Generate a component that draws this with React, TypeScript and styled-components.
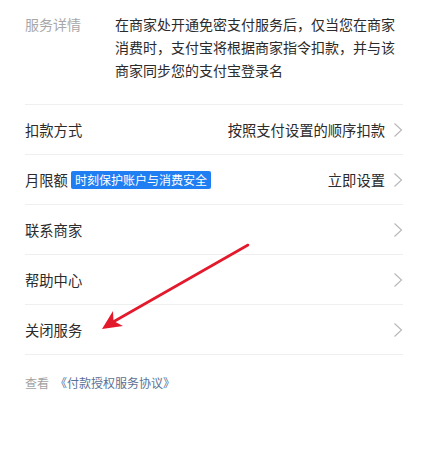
import React from "react";
import styled, { createGlobalStyle } from "styled-components";

const Global = createGlobalStyle`
  html, body {
    margin: 0;
    padding: 0;
    background: #ffffff;
  }
  body {
    font-family: "Noto Sans CJK SC", "Noto Sans", sans-serif;
    color: #2b2b2b;
  }
`;

const Page = styled.div`
  position: relative;
  width: 427px;
  height: 474px;
  background: #fff;
  box-sizing: border-box;
  padding: 0 24px 0 25px;
  overflow: hidden;
`;

const Detail = styled.div`
  display: grid;
  grid-template-columns: 90px 1fr;
  padding: 13px 0 22px;
  font-size: 14px;
  line-height: 23px;
`;

const DetailLabel = styled.div`
  color: #a8a8a8;
`;

const DetailText = styled.div`
  color: #2b2b2b;
`;

const Row = styled.div`
  display: flex;
  align-items: center;
  height: 49px;
  border-top: 1px solid #efefef;
  font-size: 14.3px;
  color: #2b2b2b;
`;

const Label = styled.span`
  white-space: nowrap;
`;

const Badge = styled.span`
  margin-left: 3px;
  height: 18px;
  line-height: 18px;
  padding: 0 4px;
  border-radius: 2px;
  background: #1f7ef2;
  color: #fff;
  font-size: 12px;
  white-space: nowrap;
`;

const Value = styled.span`
  margin-left: auto;
  margin-right: 8px;
  color: #2b2b2b;
  white-space: nowrap;
`;

const Spacer = styled.span`
  margin-left: auto;
`;

const Chevron = () => (
  <svg width="10" height="16" viewBox="0 0 10 16" style={{ display: "block" }}>
    <path d="M1.5 1.5 L8.5 8 L1.5 14.5" fill="none" stroke="#b9b9b9" strokeWidth="1.2" />
  </svg>
);

const Rows = styled.div`
  border-bottom: 1px solid #efefef;
`;

const Footer = styled.div`
  margin-top: 19px;
  font-size: 12px;
  line-height: 18px;
  display: flex;
  gap: 6px;
`;

const FooterMuted = styled.span`
  color: #a2a2a2;
`;

const FooterLink = styled.span`
  color: #5b6f94;
`;

const ArrowSvg = styled.svg`
  position: absolute;
  left: 0;
  top: 0;
  pointer-events: none;
`;

export default function App() {
  return (
    <>
      <Global />
      <Page>
        <Detail>
          <DetailLabel>服务详情</DetailLabel>
          <DetailText>
            在商家处开通免密支付服务后，仅当您在商家消费时，支付宝将根据商家指令扣款，并与该商家同步您的支付宝登录名
          </DetailText>
        </Detail>
        <Rows>
          <Row>
            <Label>扣款方式</Label>
            <Value>按照支付设置的顺序扣款</Value>
            <Chevron />
          </Row>
          <Row>
            <Label>月限额</Label>
            <Badge>时刻保护账户与消费安全</Badge>
            <Value>立即设置</Value>
            <Chevron />
          </Row>
          <Row>
            <Label>联系商家</Label>
            <Spacer />
            <Chevron />
          </Row>
          <Row>
            <Label>帮助中心</Label>
            <Spacer />
            <Chevron />
          </Row>
          <Row>
            <Label>关闭服务</Label>
            <Spacer />
            <Chevron />
          </Row>
        </Rows>
        <Footer>
          <FooterMuted>查看</FooterMuted>
          <FooterLink>《付款授权服务协议》</FooterLink>
        </Footer>
        <ArrowSvg width="427" height="474" viewBox="0 0 427 474">
          <line x1="248" y1="245" x2="113" y2="322" stroke="#e3192c" strokeWidth="2.6" strokeLinecap="round" />
          <path d="M102 329 L113 311 L113.5 321 L123 326 Z" fill="#e3192c" />
        </ArrowSvg>
      </Page>
    </>
  );
}
